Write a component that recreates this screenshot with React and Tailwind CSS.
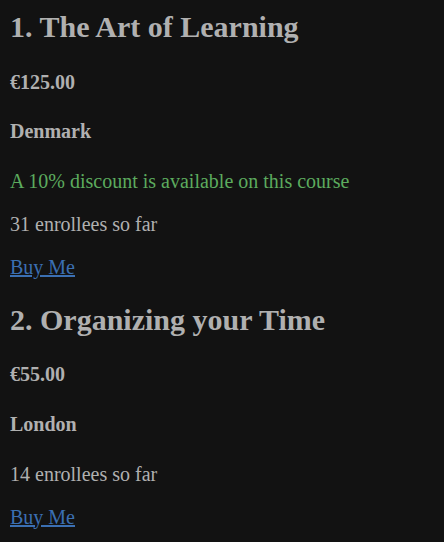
import React from "react";

const courses = [
  { title: "1. The Art of Learning", price: "€125.00", place: "Denmark", discount: "A 10% discount is available on this course", enrollees: 31 },
  { title: "2. Organizing your Time", price: "€55.00", place: "London", discount: null, enrollees: 14 },
];

export default function App() {
  return (
    <div className="min-h-screen bg-[#121212] p-[10px] font-['Liberation_Serif',serif] text-[20px] leading-[normal] text-[#b0b0b0]">
      {courses.map((c, i) => (
        <div key={c.title}>
          <h2 className={`${i === 0 ? "mt-0" : "mt-[24px]"} mb-[25px] text-[30px] font-bold leading-[normal]`}>{c.title}</h2>
          <h4 className="my-[26.6px] text-[20px] font-bold leading-[normal]">{c.price}</h4>
          <h4 className="my-[26.6px] text-[20px] font-bold leading-[normal]">{c.place}</h4>
          {c.discount && <p className="my-[20px] text-[#5cab5e]">{c.discount}</p>}
          <p className="my-[20px]">{c.enrollees} enrollees so far</p>
          <p className="my-[20px]">
            <a href="#" className="text-[#3b6fb2] underline">Buy Me</a>
          </p>
        </div>
      ))}
    </div>
  );
}
